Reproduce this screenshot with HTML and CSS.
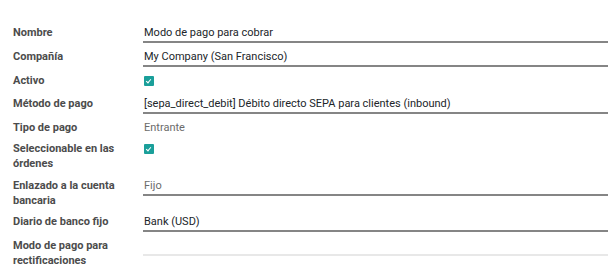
FILE: index.html
```html
<!DOCTYPE html>
<html lang="es">
<head>
    <meta charset="UTF-8">
    <meta name="viewport" content="width=device-width, initial-scale=1.0">
    <title>Modo de pago</title>
    <link rel="stylesheet" href="styles.css">
</head>
<body>
    <div class="form-sheet">
        <div class="field-row">
            <label class="field-label">Nombre</label>
            <div class="field-value input">Modo de pago para cobrar</div>
        </div>
        <div class="field-row">
            <label class="field-label">Compañía</label>
            <div class="field-value input">My Company (San Francisco)</div>
        </div>
        <div class="field-row">
            <label class="field-label">Activo</label>
            <div class="field-value"><span class="checkbox"></span></div>
        </div>
        <div class="field-row">
            <label class="field-label">Método de pago</label>
            <div class="field-value input">[sepa_direct_debit] Débito directo SEPA para clientes (inbound)</div>
        </div>
        <div class="field-row">
            <label class="field-label">Tipo de pago</label>
            <div class="field-value readonly">Entrante</div>
        </div>
        <div class="field-row tall">
            <label class="field-label">Seleccionable en las órdenes</label>
            <div class="field-value"><span class="checkbox"></span></div>
        </div>
        <div class="field-row">
            <label class="field-label">Enlazado a la cuenta bancaria</label>
            <div class="field-value input readonly">Fijo</div>
        </div>
        <div class="field-row">
            <label class="field-label">Diario de banco fijo</label>
            <div class="field-value input">Bank (USD)</div>
        </div>
        <div class="field-row">
            <label class="field-label">Modo de pago para rectificaciones</label>
            <div class="field-value input empty"></div>
        </div>
    </div>
</body>
</html>
```

FILE: styles.css
```css
body {
    margin: 0;
    background-color: #fff;
    font-family: Roboto, "Noto Sans", sans-serif;
    font-size: 11px;
    color: #212529;
}
.form-sheet {
    padding: 25px 0 0 13px;
}
.field-row {
    display: flex;
    align-items: flex-start;
    padding-bottom: 6px;
}
.field-row.tall {
    padding-bottom: 7px;
}
.field-label {
    width: 130px;
    flex-shrink: 0;
    line-height: 15px;
    font-weight: bold;
    color: #4c4c4c;
    padding-right: 10px;
    box-sizing: border-box;
}
.field-value {
    flex: 1;
    line-height: 15px;
    min-height: 15px;
    padding-left: 1px;
}
.input {
    padding-bottom: 1px;
    border-bottom: 2px solid #858585;
}
.input.empty {
    border-bottom-color: #e8e8e8;
}
.readonly {
    color: #6b6b6b;
}
.checkbox {
    display: inline-block;
    width: 10px;
    height: 10px;
    margin-top: 3px;
    background-color: #1a9f9a;
    border-radius: 1px;
    position: relative;
}
.checkbox::after {
    content: '';
    position: absolute;
    left: 3px;
    top: 2px;
    width: 2px;
    height: 4px;
    border: solid #fff;
    border-width: 0 1px 1px 0;
    transform: rotate(40deg);
}
```
